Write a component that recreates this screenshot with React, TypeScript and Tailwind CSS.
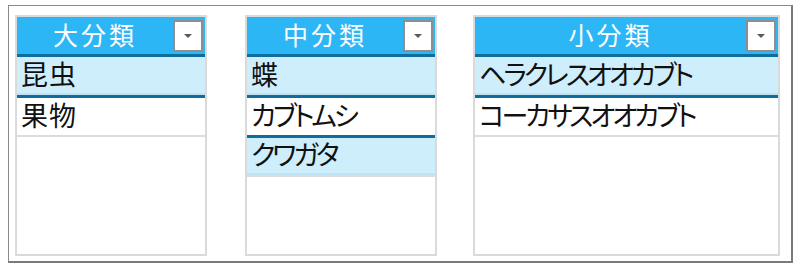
import React from "react";

type Item = { label: string; selected: boolean; kana?: boolean };

const font = "font-['Noto_Sans_CJK_JP','Noto_Sans_CJK_SC',sans-serif]";

const Slicer = ({ title, items, width }: { title: string; items: Item[]; width: string }) => {
  return (
    <div className={`${width} h-[241px] border-2 border-[#dadada] bg-white flex flex-col`}>
      {/* header */}
      <div className="h-[37px] bg-[#2db6f5] flex items-start">
        <div className="flex-1 h-full flex items-center justify-center text-white text-[25px] leading-none tracking-[3px] pb-[2px]">
          {title}
        </div>
        <div className="w-[30px] h-[32px] mt-[3px] mr-[2px] border-2 border-[#8e8e8e] bg-white flex items-center justify-center">
          <svg width="10" height="6" viewBox="0 0 10 6">
            <path d="M1 1 L9 1 L5 5 Z" fill="#5a5a5a" />
          </svg>
        </div>
      </div>

      {/* items */}
      {items.map((item, i) => (
        <div
          key={item.label}
          className={`border-t-[3px] border-[#0f6d9e] flex items-center pl-[4px] text-[27px] leading-none text-[#111] ${
            i === 0 ? "h-[41px]" : "h-[40px]"
          } ${item.selected ? "bg-[#cfeefc] border-b-2 border-b-[#bfe3f4]" : "bg-white"}`}
        >
          <span
            className={
              item.kana
                ? "-mt-[4px] [font-feature-settings:'palt'] tracking-[-3px]"
                : "-mt-[4px] tracking-[1px]"
            }
          >
            {item.label}
          </span>
        </div>
      ))}
      <div className="border-t-2 border-[#dcdcdc] flex-1 bg-white" />
    </div>
  );
};

export default function App() {
  return (
    <div className={`w-[800px] h-[271px] bg-white pt-[5px] pl-[8px] ${font}`}>
      <div className="w-[785px] h-[258px] border border-[#8a8a8a] border-r-2 border-b-2 border-r-[#7a7a7a] border-b-[#7a7a7a] pt-[9px] pl-[6px] flex items-start">
        <Slicer
          title="大分類"
          width="w-[192px]"
          items={[
            { label: "昆虫", selected: true },
            { label: "果物", selected: false },
          ]}
        />
        <div className="w-[38px]" />
        <Slicer
          title="中分類"
          width="w-[192px]"
          items={[
            { label: "蝶", selected: true },
            { label: "カブトムシ", selected: false, kana: true },
            { label: "クワガタ", selected: true, kana: true },
          ]}
        />
        <div className="w-[36px]" />
        <Slicer
          title="小分類"
          width="w-[307px]"
          items={[
            { label: "ヘラクレスオオカブト", selected: true, kana: true },
            { label: "コーカサスオオカブト", selected: false, kana: true },
          ]}
        />
      </div>
    </div>
  );
}
